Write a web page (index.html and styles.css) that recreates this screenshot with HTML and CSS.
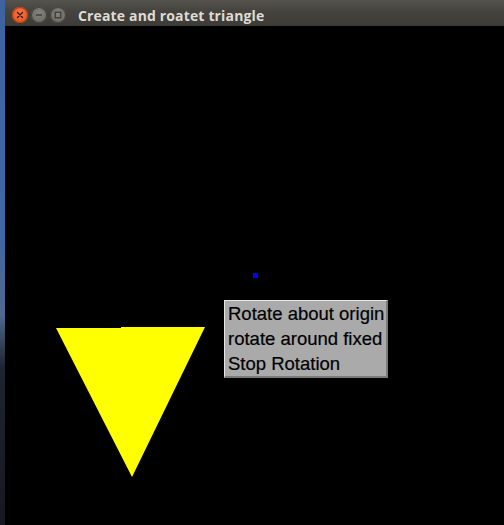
FILE: index.html
```html
<!DOCTYPE html>
<html>
<head>
<meta charset="utf-8">
<link rel="stylesheet" href="styles.css">
</head>
<body>
<div class="screen">
  <div class="desktop-strip"></div>
  <div class="window">
    <div class="titlebar">
      <div class="controls">
        <span class="btn close">
          <svg width="8" height="8" viewBox="0 0 8 8"><path d="M1.5 1.5 L6.5 6.5 M6.5 1.5 L1.5 6.5" stroke="#3a1a10" stroke-width="1.4" stroke-linecap="round"/></svg>
        </span>
        <span class="btn">
          <svg width="8" height="8" viewBox="0 0 8 8"><path d="M1 4 H7" stroke="#3c3b37" stroke-width="1.4"/></svg>
        </span>
        <span class="btn">
          <svg width="8" height="8" viewBox="0 0 8 8"><rect x="1.2" y="1.2" width="5.6" height="5.6" fill="none" stroke="#3c3b37" stroke-width="1.3"/></svg>
        </span>
      </div>
      <span class="title">Create and roatet triangle</span>
    </div>
    <div class="canvas">
      <svg class="shape" width="499" height="499" viewBox="0 0 499 499">
        <polygon points="51,302 116,302 116,301 200,301 127,451" fill="#ffff00"/>
        <rect x="248" y="247" width="5" height="5" fill="#0000ff"/>
      </svg>
      <div class="menu">
        <div class="item">Rotate about origin</div>
        <div class="item">rotate around fixed</div>
        <div class="item">Stop Rotation</div>
      </div>
    </div>
  </div>
</div>
</body>
</html>
```

FILE: styles.css
```css
html, body {
  margin: 0;
  padding: 0;
  background: #000;
}
.screen {
  display: flex;
  width: 504px;
  height: 525px;
  overflow: hidden;
}
.desktop-strip {
  width: 5px;
  flex: none;
  background: linear-gradient(to bottom, #3d64a0 0%, #3f67a3 45%, #50698e 60%, #1e2430 70%, #15181f 100%);
}
.window {
  flex: 1;
  display: flex;
  flex-direction: column;
}
.titlebar {
  height: 26px;
  flex: none;
  display: flex;
  align-items: center;
  background: linear-gradient(to bottom, #55534e 0%, #46443f 40%, #3c3b37 100%);
  padding-top: 4px;
  box-sizing: border-box;
}
.controls {
  display: flex;
  gap: 3px;
  margin-left: 7px;
}
.btn {
  width: 16px;
  height: 16px;
  border-radius: 50%;
  background: radial-gradient(circle at 50% 40%, #85837e 0%, #6f6d68 70%, #5a5853 100%);
  box-shadow: inset 0 0 0 1px #44423d;
  display: flex;
  align-items: center;
  justify-content: center;
}
.btn.close {
  background: radial-gradient(circle at 50% 40%, #f47a4e 0%, #e8541f 70%, #c8461a 100%);
  box-shadow: inset 0 0 0 1px #b04016;
}
.title {
  margin-left: 12px;
  font-family: "Open Sans", "DejaVu Sans", sans-serif;
  font-weight: 700;
  font-size: 14px;
  color: #dfdbd2;
  letter-spacing: 0.15px;
}
.canvas {
  position: relative;
  flex: 1;
  background: #000;
}
.shape {
  position: absolute;
  left: 0;
  top: 0;
}
.menu {
  position: absolute;
  left: 219px;
  top: 274px;
  width: 158px;
  background: #aaaaaa;
  border-top: 1px solid #e6e6e6;
  border-left: 1px solid #e6e6e6;
  border-right: 2px solid #7a7a7a;
  border-bottom: 2px solid #7a7a7a;
  padding: 0 0 0 3px;
}
.item {
  font-family: "Liberation Sans", Arial, sans-serif;
  font-size: 18.5px;
  line-height: 25px;
  color: #000;
  white-space: nowrap;
  -webkit-text-stroke: 0.2px #000;
}
```
